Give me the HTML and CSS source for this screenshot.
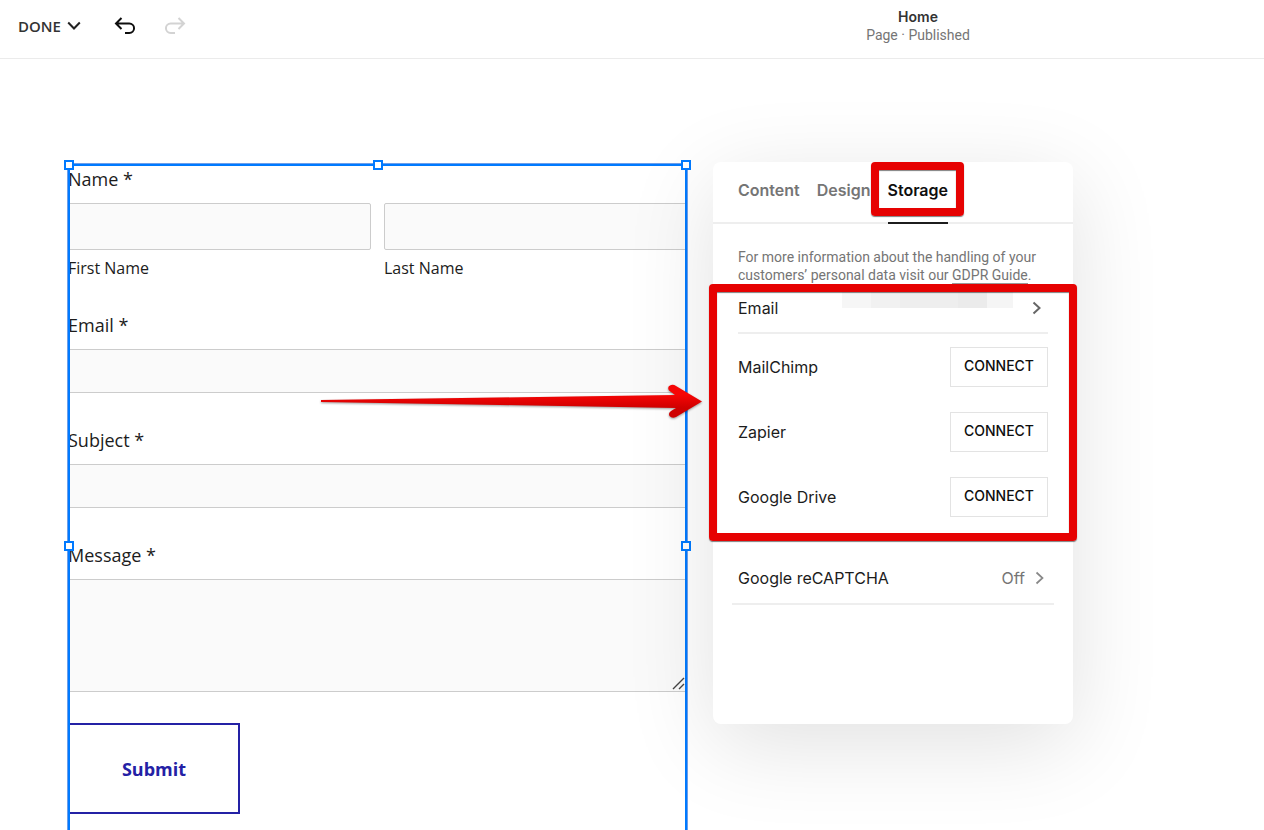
FILE: index.html
```
<!DOCTYPE html>
<html lang="en">
<head>
<meta charset="UTF-8">
<meta name="viewport" content="width=device-width, initial-scale=1.0">
<title>Home</title>
<link rel="stylesheet" href="styles.css">
</head>
<body>

<header class="topbar">
  <div class="toolbar">
    <button type="button" class="done-button">
      DONE
      <svg width="14" height="10" viewBox="0 0 14 10"><path d="M1.2 1.5 L7 7.5 L12.8 1.5" fill="none" stroke="#222" stroke-width="2"/></svg>
    </button>
    <button type="button" class="icon-button" aria-label="Undo">
      <svg width="22" height="18" viewBox="0 0 22 18"><path d="M7.5 1 L2 6.5 L7.5 12 M2.5 6.5 H15.3 A4.7 4.7 0 0 1 15.3 16 H11" fill="none" stroke="#0e0e0e" stroke-width="2"/></svg>
    </button>
    <button type="button" class="icon-button" aria-label="Redo" disabled>
      <svg width="22" height="18" viewBox="0 0 22 18"><path d="M14.5 1 L20 6.5 L14.5 12 M19.5 6.5 H6.7 A4.7 4.7 0 0 0 6.7 16 H11" fill="none" stroke="#d3d3d3" stroke-width="2"/></svg>
    </button>
  </div>
  <div class="page-info">
    <div class="page-title">Home</div>
    <div class="page-status">Page · Published</div>
  </div>
</header>

<main class="editor">
  <form class="form-block">
    <div class="field">
      <div class="field-label">Name *</div>
      <div class="name-row">
        <div>
          <input class="form-input tall" type="text" id="first-name">
          <label class="caption" for="first-name">First Name</label>
        </div>
        <div>
          <input class="form-input tall" type="text" id="last-name">
          <label class="caption" for="last-name">Last Name</label>
        </div>
      </div>
    </div>
    <div class="field">
      <label class="field-label" for="email">Email *</label>
      <input class="form-input" type="text" id="email">
    </div>
    <div class="field">
      <label class="field-label" for="subject">Subject *</label>
      <input class="form-input" type="text" id="subject">
    </div>
    <div class="field message">
      <label class="field-label" for="message">Message *</label>
      <textarea class="form-input" id="message"></textarea>
      <svg class="grip" width="13" height="13" viewBox="0 0 13 13"><path d="M1 12 L12 1 M7 12 L12 7" fill="none" stroke="#444" stroke-width="1.4"/></svg>
    </div>
    <button type="button" class="submit-button">Submit</button>

    <!-- selection frame -->
    <div class="selection">
      <span class="handle top left"></span>
      <span class="handle top center"></span>
      <span class="handle top right"></span>
      <span class="handle middle left"></span>
      <span class="handle middle right"></span>
    </div>
  </form>

  <aside class="panel">
    <nav class="tabs">
      <button type="button" class="tab">Content</button>
      <button type="button" class="tab">Design</button>
      <button type="button" class="tab active">Storage<span class="highlight tab-highlight"></span></button>
    </nav>
    <div class="panel-body">
      <p class="info">For more information about the handling of your customers’ personal data visit our <a href="#">GDPR Guide</a>.</p>
      <section class="storage">
        <div class="row email-row">
          <span>Email</span>
          <span class="redacted"></span>
          <svg width="10" height="14" viewBox="0 0 10 14"><path d="M1.5 1.5 L7.5 7 L1.5 12.5" fill="none" stroke="#666" stroke-width="2"/></svg>
        </div>
        <div class="row">
          <span>MailChimp</span>
          <button type="button" class="connect-button">CONNECT</button>
        </div>
        <div class="row">
          <span>Zapier</span>
          <button type="button" class="connect-button">CONNECT</button>
        </div>
        <div class="row">
          <span>Google Drive</span>
          <button type="button" class="connect-button">CONNECT</button>
        </div>
        <div class="highlight storage-highlight"></div>
      </section>
      <div class="row captcha-row">
        <span>Google reCAPTCHA</span>
        <span class="captcha-state">Off</span>
        <svg width="10" height="14" viewBox="0 0 10 14"><path d="M1.5 1.5 L7.5 7 L1.5 12.5" fill="none" stroke="#888" stroke-width="1.7"/></svg>
      </div>
    </div>

    <!-- arrow pointing at the storage list -->
    <svg class="arrow" width="384" height="36" viewBox="0 0 384 36">
      <defs>
        <linearGradient id="red" x1="0" y1="0" x2="0" y2="1">
          <stop offset="0.3" stop-color="#f60505"/>
          <stop offset="0.7" stop-color="#cf0000"/>
        </linearGradient>
      </defs>
      <path d="M1 16 L355 11 L349 6.500 Q347 3 350 1.500 Q353 0 356 2 L382 17.500 L356 33 Q352 35 349.500 32 Q348 29 351 27 L356 24 L1 18 Z" fill="url(#red)"/>
    </svg>
  </aside>
</main>

</body>
</html>
```

FILE: styles.css
```
* {
  box-sizing: border-box;
}

body {
  margin: 0;
  height: 100vh;
  overflow: hidden;
  background: #fff;
  color: #1c1c1c;
  font-family: Inter, sans-serif;
}

button {
  padding: 0;
  border: none;
  background: none;
  font-family: inherit;
  cursor: pointer;
}

svg {
  display: block;
}

.topbar {
  display: grid;
  grid-template-columns: 1fr 692px;
  height: 59px;
  border-bottom: 1px solid #ebebeb;
}

.toolbar {
  display: flex;
  align-items: center;
  padding: 0 0 6px 18px;
}

.done-button {
  display: flex;
  align-items: center;
  gap: 6px;
  margin-right: 33px;
  color: #333;
  font-family: "Open Sans", sans-serif;
  font-size: 15px;
  font-weight: 600;
}

.icon-button {
  margin-right: 28px;
}

.page-info {
  padding-top: 7px;
  text-align: center;
  line-height: 19px;
}

.page-title {
  color: #333;
  font-size: 14px;
  font-weight: 600;
}

.page-status {
  color: #757575;
  font-family: Roboto, sans-serif;
  font-size: 14px;
}

.editor {
  display: grid;
  grid-template-columns: minmax(0, 1fr) 360px;
  align-items: start;
  gap: 26px;
  padding: 103px 191px 0 68px;
}

.form-block {
  position: relative;
  margin-top: 2px;
  padding: 3px 0 114px;
  font-family: "Open Sans", sans-serif;
}

.field {
  margin-bottom: 35px;
}

.field-label {
  display: block;
  margin-bottom: 12px;
  font-size: 18px;
  line-height: 24px;
}

.name-row {
  display: grid;
  grid-template-columns: 1fr 1fr;
  gap: 13px;
}

.form-input {
  display: block;
  width: 100%;
  height: 44px;
  padding: 10px;
  border: 1px solid #ccc;
  border-radius: 2px;
  background: #fafafa;
  font-size: 16px;
}

.form-input.tall {
  height: 47px;
}

textarea.form-input {
  height: 113px;
  resize: none;
}

.caption {
  display: block;
  margin-top: 8px;
  font-size: 16px;
  line-height: 20px;
}

.message {
  position: relative;
  margin-bottom: 31px;
}

.grip {
  position: absolute;
  right: 2px;
  bottom: 2px;
}

.submit-button {
  display: block;
  width: 172px;
  height: 91px;
  border: 2px solid #2421a5;
  color: #2421a5;
  font-size: 18px;
  font-weight: 700;
}

.selection {
  position: absolute;
  inset: 0;
  border: 2px solid #007aff;
  box-shadow: 0 0 0 1px #6d9eea;
  pointer-events: none;
}

.handle {
  position: absolute;
  width: 10px;
  height: 10px;
  border: 2px solid #007aff;
  background: #fff;
}

.handle.top {
  top: -6px;
}

.handle.middle {
  top: calc(50% - 5px);
}

.handle.left {
  left: -6px;
}

.handle.center {
  left: calc(50% - 5px);
}

.handle.right {
  right: -6px;
}

.panel {
  position: relative;
  min-height: 562px;
  border-radius: 8px;
  background: #fff;
  box-shadow: 0 20px 90px rgba(0, 0, 0, 0.12);
}

.tabs {
  display: flex;
  gap: 17px;
  height: 62px;
  padding: 0 25px;
  border-bottom: 2px solid #eee;
}

.tab {
  position: relative;
  height: 62px;
  padding-bottom: 4px;
  border-bottom: 2px solid transparent;
  color: #757575;
  font-size: 16px;
  font-weight: 600;
}

.tab.active {
  border-color: #1c1c1c;
  color: #0e0e0e;
}

/* red callout boxes */
.highlight {
  position: absolute;
  border: 8px solid #e60202;
  border-radius: 4px;
  box-shadow: 0 1px 1px rgba(0, 0, 0, 0.5), inset 0 1px 1px rgba(0, 0, 0, 0.5);
  pointer-events: none;
}

.tab-highlight {
  inset: 0 -16px 6px -17px;
}

.panel-body {
  padding: 24px 25px 0;
}

.info {
  margin: 0;
  color: #757575;
  font-family: Roboto, sans-serif;
  font-size: 14px;
  line-height: 18px;
}

.info a {
  border-bottom: 1px solid #999;
  color: inherit;
  text-decoration: none;
}

.storage {
  position: relative;
  padding-bottom: 24px;
}

.storage-highlight {
  inset: 0 -29px 0;
}

.row {
  display: flex;
  align-items: center;
  justify-content: space-between;
  margin-top: 25px;
  font-size: 16px;
}

.row + .row {
  min-height: 40px;
}

.email-row {
  height: 50px;
  margin: 0 0 13px;
  padding-right: 6px;
  border-bottom: 2px solid #eee;
}

.email-row + .row {
  margin-top: 0;
}

.redacted {
  align-self: flex-start;
  width: 171px;
  height: 16px;
  margin: 8px 0 0 44px;
  background: linear-gradient(90deg, #f6f6f6 17%, #f1f1f1 17% 34%, #eee 34% 68%, #ebebeb 68% 85%, #f5f5f5 85%);
}

.connect-button {
  width: 98px;
  height: 40px;
  padding-bottom: 4px;
  border: 1px solid #e3e3e3;
  color: #0e0e0e;
  font-size: 14px;
  font-weight: 500;
}

.captcha-row {
  height: 52px;
  margin: 12px -6px 0;
  padding: 0 9px 0 6px;
  border-bottom: 2px solid #eee;
}

.captcha-state {
  margin: 0 10px 0 auto;
  color: #757575;
}

.arrow {
  position: absolute;
  top: 222px;
  right: 369px;
  filter: drop-shadow(0 1px 1px rgba(0, 0, 0, 0.4));
}
```
